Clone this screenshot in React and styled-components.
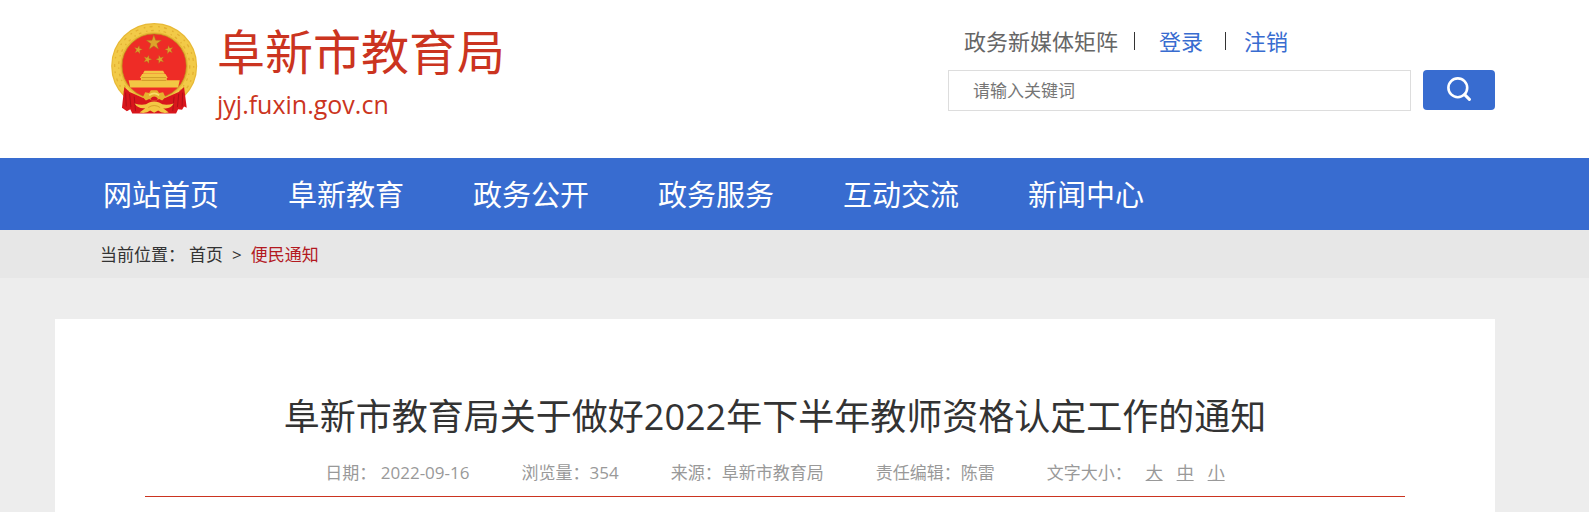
import React, { useState } from 'react';
import styled, { createGlobalStyle } from 'styled-components';

const GlobalStyle = createGlobalStyle`
  * {
    box-sizing: border-box;
  }

  body {
    margin: 0;
    background: #ededed;
    color: #333;
    font-family: 'Open Sans', 'Noto Sans CJK SC', sans-serif;
    font-size: 17px;
    line-height: 24px;
  }

  a {
    color: inherit;
    text-decoration: none;
  }
`;

// Full width strip, the content is kept a little left of centre
const Band = styled.div`
  padding-right: 39px;
  background: ${({ $bg }) => $bg || 'transparent'};
`;

const Container = styled.div`
  max-width: 1440px;
  margin: 0 auto;
`;

const HeaderRow = styled(Container)`
  display: flex;
  justify-content: space-between;
  height: 158px;
  padding-left: 55px;
`;

const Brand = styled.a`
  display: flex;
  gap: 18px;
  padding-top: 22px;
  color: #cb3420;
`;

const SiteName = styled.h1`
  margin: 0;
  font-size: 48px;
  line-height: 60px;
  font-weight: 400;
`;

const SiteUrl = styled.p`
  margin: 0;
  font-size: 25px;
  line-height: 44px;
`;

const Tools = styled.div`
  flex: 0 1 547px;
  padding-top: 26px;
`;

const UserLinks = styled.div`
  display: flex;
  align-items: center;
  padding-left: 16px;
  margin-bottom: 14px;
  font-size: 22px;
  line-height: 30px;
  color: #666;
`;

const UserLink = styled.a`
  color: ${({ $plain }) => ($plain ? '#666' : '#386cd0')};
`;

const Divider = styled.span`
  width: 1px;
  height: 18px;
  margin: 0 ${({ $after }) => $after}px 0 ${({ $before }) => $before}px;
  background: #333;
`;

const SearchForm = styled.form`
  display: flex;
  gap: 12px;
`;

const SearchInput = styled.input`
  flex: 1;
  min-width: 0;
  height: 41px;
  padding: 0 24px;
  border: 1px solid #ddd;
  background: #fff;
  font: inherit;
  color: #333;

  &::placeholder {
    color: #757575;
  }
`;

const SearchButton = styled.button`
  width: 72px;
  height: 40px;
  padding: 0 0 2px;
  border: none;
  border-radius: 4px;
  background: #386cd0;
  cursor: pointer;

  svg {
    display: block;
    margin: 0 auto;
  }
`;

const Nav = styled.nav`
  ul {
    display: flex;
    gap: 69px;
    margin: 0;
    padding: 0 0 0 48px;
    list-style: none;
  }

  a {
    display: block;
    padding-top: 2px;
    color: #fff;
    font-size: 29px;
    line-height: 70px;
    white-space: nowrap;
  }
`;

const Breadcrumb = styled.nav`
  display: flex;
  gap: 4px;
  padding: 2px 0 0 45px;
  line-height: 46px;
`;

const Trail = styled.div`
  display: flex;
  gap: 9px;
`;

const Current = styled.a`
  color: #b3191f;
`;

const Article = styled.article`
  min-height: 193px;
  margin-top: 41px;
  padding: 69px 90px 0;
  background: #fff;
`;

const ArticleTitle = styled.h2`
  margin: 0 0 15px;
  font-size: 36px;
  line-height: 58px;
  font-weight: 400;
  text-align: center;
`;

const Meta = styled.div`
  display: flex;
  justify-content: center;
  gap: 52px;
  padding-bottom: 11px;
  border-bottom: 1px solid #cb3420;
  color: #999;
  white-space: nowrap;
`;

const SizePicker = styled.div`
  display: flex;
  gap: 14px;
`;

const SizeButton = styled.button`
  padding: 0;
  border: none;
  background: none;
  color: inherit;
  font: inherit;
  text-decoration: underline;
  cursor: pointer;
`;

const Emblem = () => (
  <svg width="89" height="92" viewBox="45 36 268 276" aria-hidden="true">
    <defs>
      <path id="star" d="M0 -10 L2.4 -3.2 L9.5 -3.1 L3.8 1.2 L5.9 8.1 L0 4 L-5.9 8.1 L-3.8 1.2 L-9.5 -3.1 L-2.4 -3.2 Z" />
    </defs>
    <circle cx="178" cy="168" r="113" fill="#ee2c26" />
    <circle cx="178" cy="168" r="113" fill="none" stroke="#e8b936" strokeWidth="33" />
    <circle cx="178" cy="168" r="114" fill="none" stroke="#f2ca48" strokeWidth="24" />
    <circle cx="178" cy="168" r="119" fill="none" stroke="#e3b032" strokeWidth="4" strokeDasharray="5 13 9 17" />
    <circle cx="178" cy="168" r="107" fill="none" stroke="#e3b032" strokeWidth="4" strokeDasharray="8 15 4 11" />
    <circle cx="178" cy="168" r="97" fill="none" stroke="#b9851c" strokeWidth="2" />
    <g fill="#dda32b" stroke="#a8701b" strokeWidth="0.6">
      <use href="#star" transform="translate(177 98) scale(2.4)" />
      <use href="#star" transform="translate(130 119) scale(1.3) rotate(12)" />
      <use href="#star" transform="translate(223 119) scale(1.3) rotate(-12)" />
      <use href="#star" transform="translate(158 148) scale(1.3) rotate(18)" />
      <use href="#star" transform="translate(196 148) scale(1.3) rotate(-18)" />
    </g>
    <g fill="#f3c744">
      <path d="M149 182 H205 L210 191 H144 Z" />
      <path d="M142 192 H212 L219 204 H135 Z" />
      <path d="M138 204 H216 V212 H138 Z" />
      <path d="M101 211 H255 L250 233 H106 Z" />
    </g>
    <path d="M140 203 H214 M140 211 H214" stroke="#b9851c" strokeWidth="2" />
    <path d="M88 231 L104 246 L145 264 H211 L252 246 L268 231 L276 294 L268 290 L262 300 L250 298 L244 311 H112 L106 298 L96 304 L81 294 Z" fill="#d8161c" />
    <path d="M92 248 L94 290 M104 252 L108 292 M118 260 L122 304 M264 248 L262 290 M252 252 L248 292 M238 260 L234 304" stroke="#a80f16" strokeWidth="2.5" fill="none" />
    <path d="M144 262 L151 247 L163 249 L168 241 H187 L193 249 L205 247 L212 262 L202 272 L193 267 L184 272 H172 L163 267 L153 272 Z" fill="#e6b12e" />
    <path d="M163 256 Q178 245 193 256" fill="none" stroke="#f9dc67" strokeWidth="5" />
    <path d="M166 267 Q178 253 190 267 L184 272 H172 Z" fill="#d8161c" />
    <path d="M119 281 Q148 290 163 278 Q178 271 193 278 Q208 290 237 281 Q226 299 205 295 L222 308 Q200 312 190 302 L178 309 L166 302 Q155 312 134 308 L151 295 Q130 298 119 281 Z" fill="#f3c744" />
    <path d="M160 293 Q178 281 196 293" fill="none" stroke="#d39a24" strokeWidth="2.5" />
  </svg>
);

const SearchIcon = () => (
  <svg width="24" height="24" viewBox="0 0 24 24" fill="none" stroke="#fff" aria-hidden="true">
    <circle cx="10.8" cy="10.8" r="9.4" strokeWidth="2.6" />
    <path d="M17.6 17.6 L22.4 22.4" strokeWidth="3" strokeLinecap="round" />
  </svg>
);

const navItems = ['网站首页', '阜新教育', '政务公开', '政务服务', '互动交流', '新闻中心'];
const sizes = ['大', '中', '小'];

const App = () => {
  const [keyword, setKeyword] = useState('');

  return (
    <div lang="zh-CN">
      <GlobalStyle />
      <Band as="header" $bg="#fff">
        <HeaderRow>
          <Brand href="#">
            <Emblem />
            <div>
              <SiteName>阜新市教育局</SiteName>
              <SiteUrl>jyj.fuxin.gov.cn</SiteUrl>
            </div>
          </Brand>
          <Tools>
            <UserLinks>
              <UserLink href="#" $plain>政务新媒体矩阵</UserLink>
              <Divider $before={16} $after={24} />
              <UserLink href="#">登录</UserLink>
              <Divider $before={22} $after={18} />
              <UserLink href="#">注销</UserLink>
            </UserLinks>
            <SearchForm onSubmit={(e) => e.preventDefault()}>
              <SearchInput
                type="text"
                aria-label="请输入关键词"
                placeholder="请输入关键词"
                value={keyword}
                onChange={(e) => setKeyword(e.target.value)}
              />
              <SearchButton type="submit" aria-label="搜索">
                <SearchIcon />
              </SearchButton>
            </SearchForm>
          </Tools>
        </HeaderRow>
      </Band>

      <Band $bg="#386cd0">
        <Container>
          <Nav>
            <ul>
              {navItems.map((item) => (
                <li key={item}><a href="#">{item}</a></li>
              ))}
            </ul>
          </Nav>
        </Container>
      </Band>

      <Band $bg="#e7e7e7">
        <Container>
          <Breadcrumb>
            <span>当前位置：</span>
            <Trail>
              <a href="#">首页</a>
              <span>&gt;</span>
              <Current href="#">便民通知</Current>
            </Trail>
          </Breadcrumb>
        </Container>
      </Band>

      <Band as="main">
        <Container>
          <Article>
            <ArticleTitle>阜新市教育局关于做好2022年下半年教师资格认定工作的通知</ArticleTitle>
            <Meta>
              <span>日期： 2022-09-16</span>
              <span>浏览量：354</span>
              <span>来源：阜新市教育局</span>
              <span>责任编辑：陈雷</span>
              <SizePicker>
                <span>文字大小：</span>
                {sizes.map((size) => (
                  <SizeButton key={size} type="button">{size}</SizeButton>
                ))}
              </SizePicker>
            </Meta>
          </Article>
        </Container>
      </Band>
    </div>
  );
};

export default App;
